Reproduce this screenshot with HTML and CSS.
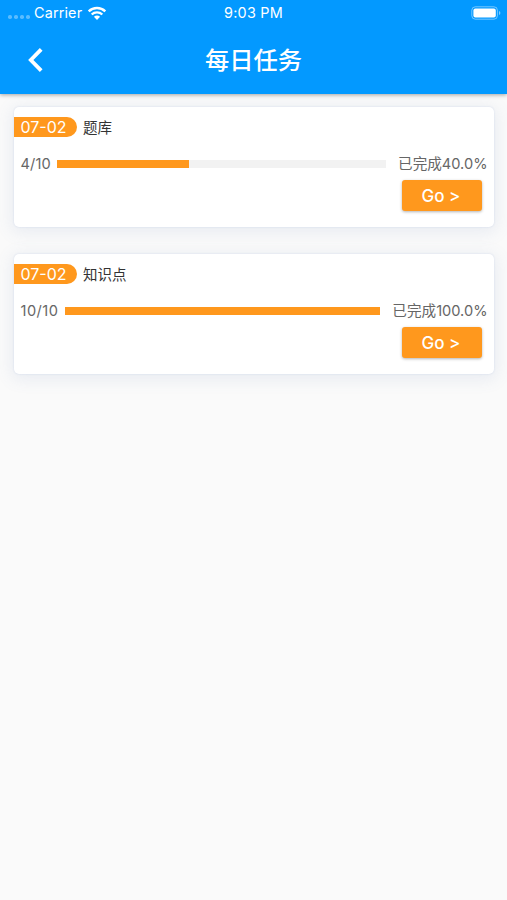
FILE: index.html
```html
<!DOCTYPE html>
<html lang="zh-CN">
<head>
  <meta charset="UTF-8" />
  <meta name="viewport" content="width=device-width, initial-scale=1.0" />
  <title>每日任务</title>
  <link rel="stylesheet" href="styles.css">
</head>
<body>
  <header class="header">
    <div class="status-bar">
      <div class="carrier">
        <span class="signal"><i></i><i></i><i></i><i></i></span>
        <span class="carrier-name">Carrier</span>
        <svg class="wifi" width="20" height="15" viewBox="0 0 20 15">
          <path d="M1.7 5.4C6.3 0.9 13.7 0.9 18.3 5.4" />
          <path d="M4.7 8.5C7.6 5.7 12.4 5.7 15.3 8.5" />
          <path class="dot" d="M6.9 10.7Q10 8.1 13.1 10.7L10 14Z" />
        </svg>
      </div>
      <span class="time">9:03 PM</span>
      <svg class="battery" width="31" height="14" viewBox="0 0 31 14">
        <rect class="case" x="0.8" y="0.8" width="25.6" height="12.4" rx="3.5" />
        <rect class="level" x="2.4" y="2.4" width="22.4" height="9.2" rx="2" />
        <path class="cap" d="M28 5v4q1.4-.7 1.4-2T28 5z" />
      </svg>
    </div>
    <div class="nav-bar">
      <svg class="back" width="16" height="24" viewBox="0 0 16 24">
        <path d="M13.2 1.4L2.8 12L13.2 22.6" />
      </svg>
      <h1>每日任务</h1>
    </div>
  </header>

  <main class="task-list">
    <section class="card">
      <div class="card-title">
        <span class="date">07-02</span>
        <span class="name">题库</span>
      </div>
      <div class="progress">
        <span class="count">4/10</span>
        <div class="track"><div class="fill" style="width: 40%"></div></div>
        <span class="percent">已完成40.0%</span>
      </div>
      <button class="go">Go &gt;</button>
    </section>

    <section class="card">
      <div class="card-title">
        <span class="date">07-02</span>
        <span class="name">知识点</span>
      </div>
      <div class="progress">
        <span class="count done">10/10</span>
        <div class="track"><div class="fill" style="width: 100%"></div></div>
        <span class="percent">已完成100.0%</span>
      </div>
      <button class="go">Go &gt;</button>
    </section>
  </main>
</body>
</html>
```
FILE: styles.css
```css
* {
  box-sizing: border-box;
}

body {
  margin: 0;
  min-height: 100vh;
  font-family: Inter, "Noto Sans CJK SC", sans-serif;
  background-color: #fafafa;
  color: #333;
}

.header {
  position: relative;
  height: 94px;
  background-color: #0399ff;
  color: #fff;
  box-shadow: 0 1px 4px rgba(0, 0, 0, 0.35);
}

/* Statusleiste */
.status-bar {
  display: grid;
  grid-template-columns: 1fr auto 1fr;
  align-items: center;
  height: 26px;
  padding: 0 5px 0 8px;
  font-size: 14.4px;
  line-height: 26px;
}

.carrier {
  display: flex;
  align-items: center;
}

.signal {
  display: flex;
  gap: 2.5px;
  width: 26px;
  padding-top: 8px;
}

.signal i {
  width: 3.5px;
  height: 3.5px;
  border-radius: 50%;
  background-color: rgba(255, 255, 255, 0.35);
}

.carrier-name {
  letter-spacing: 0.15px;
}

.wifi {
  margin-left: 5px;
  fill: none;
  stroke: #fff;
  stroke-width: 2.4;
}

.wifi .dot {
  fill: #fff;
  stroke: none;
}

.time {
  margin-right: 3px;
  letter-spacing: 0.25px;
}

.battery {
  justify-self: end;
  fill: #fff;
}

.battery .case {
  fill: none;
  stroke: rgba(255, 255, 255, 0.45);
}

.battery .cap {
  fill: rgba(255, 255, 255, 0.5);
}

.nav-bar {
  display: grid;
  grid-template-columns: 60px 1fr 60px;
  align-items: center;
  height: 67px;
}

.back {
  margin-left: 28px;
  fill: none;
  stroke: #fff;
  stroke-width: 3.8;
}

h1 {
  margin: 0;
  font-size: 24.3px;
  font-weight: 500;
  line-height: 36px;
  text-align: center;
}

.task-list {
  display: flex;
  flex-direction: column;
  gap: 27px;
  padding: 13px 13px 0 14px;
}

.card {
  display: flex;
  flex-direction: column;
  height: 120px;
  padding-top: 10px;
  border-radius: 5px;
  background-color: #fff;
  box-shadow: 0 0 2px rgba(70, 110, 190, 0.18), 0 3px 16px 3px rgba(90, 120, 180, 0.1);
}

.card-title {
  display: flex;
  align-items: center;
  gap: 6px;
  height: 20px;
}

.date {
  width: 63px;
  height: 20px;
  padding-left: 6.5px;
  border-radius: 0 10px 10px 0;
  background-color: #ff981d;
  color: #fff;
  font-size: 16px;
  line-height: 20px;
}

.name {
  padding-top: 1px;
  font-size: 14.5px;
  line-height: 20px;
}

.progress {
  display: flex;
  align-items: center;
  height: 20px;
  margin: 17px 6.5px 0 6.5px;
  color: #666;
  font-size: 14.6px;
  line-height: 20px;
}

.count {
  letter-spacing: 0.15px;
}

.count.done {
  letter-spacing: 0.45px;
}

.track {
  flex: 1;
  height: 8px;
  margin: 0 12.5px 0 6.5px;
  background-color: #f2f2f2;
}

.fill {
  height: 100%;
  background-color: #ff981d;
}

.go {
  align-self: flex-end;
  width: 80px;
  height: 31px;
  margin: 6px 12px 0 0;
  padding: 0 2px 0 0;
  border: none;
  border-radius: 3px;
  background-color: #ff981d;
  box-shadow: 0 1px 3px rgba(0, 0, 0, 0.3);
  color: #fff;
  font-family: inherit;
  font-size: 17px;
  font-weight: 500;
}
```
